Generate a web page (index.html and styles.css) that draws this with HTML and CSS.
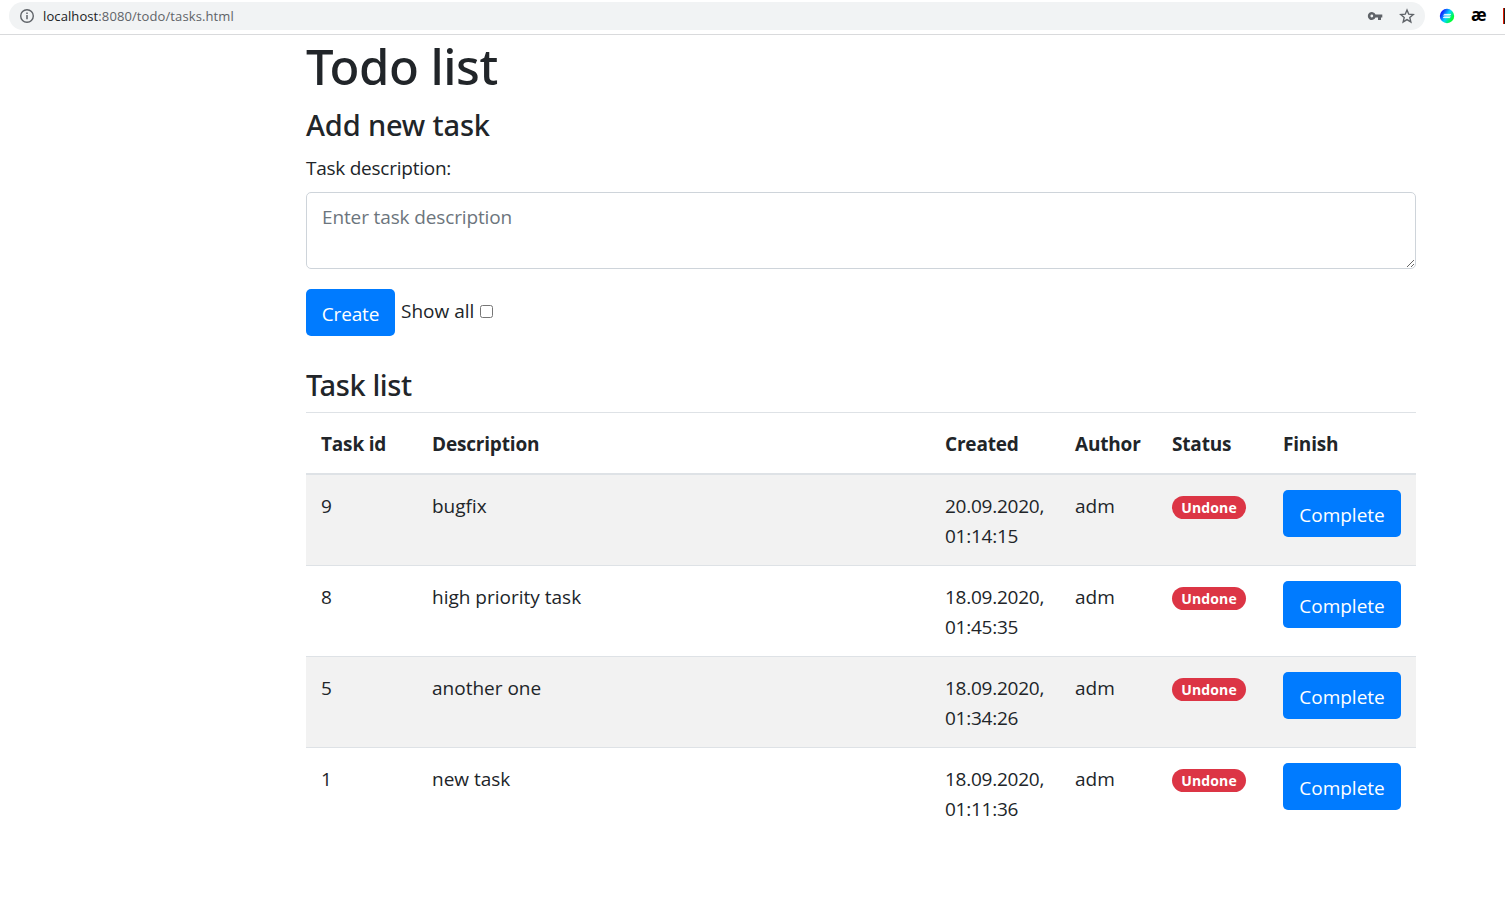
FILE: index.html
```html
<!DOCTYPE html>
<html lang="en">
<head>
<meta charset="utf-8">
<title>Todo list</title>
<link rel="stylesheet" href="styles.css">
</head>
<body>
<header class="toolbar">
  <div class="address">
    <svg class="info" width="16" height="16" viewBox="0 0 16 16"><circle cx="8" cy="8" r="6.3" fill="none" stroke="#5f6368" stroke-width="1.4"/><path d="M8 7v4.3M8 4.5v1.5" stroke="#5f6368" stroke-width="1.5"/></svg>
    <span class="url"><span class="host">localhost</span>:8080/todo/tasks.html</span>
    <svg class="key" width="16" height="16" viewBox="0 0 16 16"><path fill="#5f6368" fill-rule="evenodd" d="M8.500 6.500A4 4 0 1 0 8.500 9.500H11V12H14V9.500H15.300V6.500ZM4.800 6.600A1.400 1.400 0 1 1 4.800 9.400A1.400 1.400 0 1 1 4.800 6.600Z"/></svg>
    <svg class="star" width="16" height="16" viewBox="0 0 16 16"><path d="M8 2l1.750 4.200 4.500.4-3.450 2.950 1.050 4.400L8 11.600l-3.850 2.350 1.050-4.400L1.750 6.600l4.500-.4z" fill="none" stroke="#5f6368" stroke-width="1.400"/></svg>
  </div>
  <svg class="globe" width="16" height="16" viewBox="0 0 16 16"><defs><linearGradient id="g" x1="0" y1=".2" x2="1" y2=".8"><stop offset=".1" stop-color="#1414ff"/><stop offset=".5" stop-color="#00d5ff"/><stop offset=".85" stop-color="#0f3"/></linearGradient></defs><circle cx="8" cy="8" r="7.200" fill="url(#g)"/><path d="M4.500 7.200l1-.9H12l-1 .9zM4 9.700l1-.9h6.500l-1 .9z" fill="#fff" stroke="#fff" stroke-width=".5"/></svg>
  <span class="ae">æ</span>
  <span class="edge"></span>
</header>
<main class="container">
  <h1 class="title">Todo list</h1>
  <h2 class="heading">Add new task</h2>
  <form class="form">
    <label class="label" for="description">Task description:</label>
    <textarea class="field" id="description" placeholder="Enter task description"></textarea>
    <div class="actions">
      <button class="btn create" type="button">Create</button>
      <label class="show" for="all">Show all</label>
      <input class="check" type="checkbox" id="all">
    </div>
  </form>
  <h2 class="heading list-heading">Task list</h2>
  <table class="tasks">
    <colgroup><col class="c-id"><col class="c-desc"><col class="c-created"><col class="c-author"><col class="c-status"><col class="c-finish"></colgroup>
    <thead><tr><th>Task id</th><th>Description</th><th>Created</th><th>Author</th><th>Status</th><th>Finish</th></tr></thead>
    <tbody>
      <tr><td>9</td><td>bugfix</td><td class="date">20.09.2020, 01:14:15</td><td>adm</td><td><span class="badge">Undone</span></td><td><button class="btn" type="button">Complete</button></td></tr>
      <tr><td>8</td><td>high priority task</td><td class="date">18.09.2020, 01:45:35</td><td>adm</td><td><span class="badge">Undone</span></td><td><button class="btn" type="button">Complete</button></td></tr>
      <tr><td>5</td><td>another one</td><td class="date">18.09.2020, 01:34:26</td><td>adm</td><td><span class="badge">Undone</span></td><td><button class="btn" type="button">Complete</button></td></tr>
      <tr><td>1</td><td>new task</td><td class="date">18.09.2020, 01:11:36</td><td>adm</td><td><span class="badge">Undone</span></td><td><button class="btn" type="button">Complete</button></td></tr>
    </tbody>
  </table>
</main>
</body>
</html>
```
FILE: styles.css
```css
* { box-sizing: border-box; }
body { margin: 0; background: #fff; color: #212529; font: 400 19px/30px "Open Sans", "Noto Sans", sans-serif; overflow: hidden; }
.toolbar { display: flex; align-items: center; height: 35px; padding: 0 0 3px 9px; border-bottom: 1px solid #d9dadc; overflow: hidden; }
.address { display: flex; align-items: center; width: 1416px; height: 28px; padding: 0 10px; border-radius: 14px; background: #f1f3f4; flex: none; }
.info { margin-right: 8px; }
.url { flex: 1; font-size: 13px; line-height: 18px; letter-spacing: .1px; color: #5f6368; }
.host { color: #202124; }
.key { margin-right: 16px; }
.globe { margin-left: 14px; flex: none; }
.ae { width: 16px; margin-left: 16px; font: 700 17px/20px "Open Sans", sans-serif; letter-spacing: -.5px; color: #000; flex: none; padding-bottom: 1px; }
.edge { width: 2px; height: 16px; margin-left: 16px; background: #1d1d1d; border-left: 1px solid #e01b00; flex: none; }
.container { width: 1110px; margin: 1px 0 0 306px; }
.title { margin: 0 0 10px; font: 500 49px/60px "Noto Sans", sans-serif; letter-spacing: -.5px; }
.heading { height: 36px; margin: 0 0 10px; padding-top: 1px; font: 500 29px/36px "Noto Sans", sans-serif; letter-spacing: -.15px; }
.list-heading { letter-spacing: -.4px; }
.label { display: block; height: 30px; margin-bottom: 10px; padding-top: 1px; letter-spacing: -.25px; }
.field { display: block; width: 100%; height: 77px; padding: 9px 15px; border: 1px solid #ced4da; border-radius: 5px; font: inherit; letter-spacing: -.13px; color: #495057; resize: vertical; }
.field::placeholder { color: #6c757d; opacity: 1; }
.actions { display: flex; margin: 20px 0 30px; height: 47px; }
.btn { display: block; width: 118px; height: 47px; padding: 3px 0 0; border: 0; border-radius: 5px; background: #007bff; color: #fff; font: inherit; white-space: nowrap; }
.create { width: 89px; letter-spacing: -.15px; }
.show { margin: 7px 0 0 6px; width: 79px; white-space: nowrap; }
.check { appearance: none; width: 13px; height: 13px; margin: 16px 0 0; border: 1px solid #767676; border-radius: 2.5px; background: #fff; }
.tasks { width: 1110px; table-layout: fixed; border-spacing: 0; }
.c-id, .c-status { width: 111px; }
.c-desc { width: 513px; }
.c-created { width: 130px; }
.c-author { width: 97px; }
.c-finish { width: 148px; }
.tasks th { padding: 16px 15px 14px; border-top: 1px solid #dee2e6; border-bottom: 2px solid #dee2e6; text-align: left; font-weight: 700; letter-spacing: -.18px; white-space: nowrap; }
.tasks td { padding: 16px 15px 14px; vertical-align: top; border-top: 1px solid #dee2e6; }
.tasks .date { letter-spacing: -.25px; }
.tasks tbody tr:first-child td { border-top: 0; }
.tasks tbody tr:nth-child(odd) { background: #f2f2f2; }
.tasks .btn { margin-top: -1px; }
.badge { display: block; width: 74px; height: 23px; margin-top: 5px; border-radius: 12px; background: #dc3545; color: #fff; font-size: 14px; line-height: 23px; letter-spacing: .15px; font-weight: 700; text-align: center; }
```
